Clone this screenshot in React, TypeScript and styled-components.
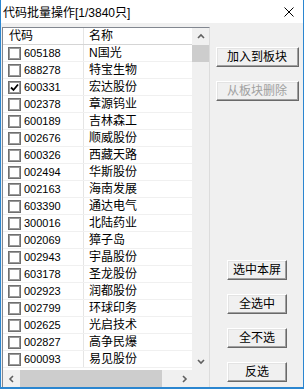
import styled, { createGlobalStyle } from "styled-components";

const STOCKS = [
    { code: "605188", name: "N国光" },
    { code: "688278", name: "特宝生物" },
    { code: "600331", name: "宏达股份", checked: true },
    { code: "002378", name: "章源钨业" },
    { code: "600189", name: "吉林森工" },
    { code: "002676", name: "顺威股份" },
    { code: "600326", name: "西藏天路" },
    { code: "002494", name: "华斯股份" },
    { code: "002163", name: "海南发展" },
    { code: "603390", name: "通达电气" },
    { code: "300016", name: "北陆药业" },
    { code: "002069", name: "獐子岛" },
    { code: "002943", name: "宇晶股份" },
    { code: "603178", name: "圣龙股份" },
    { code: "002923", name: "润都股份" },
    { code: "002799", name: "环球印务" },
    { code: "002625", name: "光启技术" },
    { code: "002827", name: "高争民爆" },
    { code: "600093", name: "易见股份" },
];

const GlobalStyle = createGlobalStyle`
    html, body { margin: 0; padding: 0; background: #ffffff; }
    body { font-family: "Liberation Sans", "Noto Sans CJK SC", sans-serif; }
`;

const Window = styled.div`
    width: 304px;
    height: 389px;
    box-sizing: border-box;
    border-left: 1px solid #2b86d0;
    border-right: 1px solid #2b86d0;
    border-bottom: 2px solid #2b86d0;
    display: flex;
    flex-direction: column;
    overflow: hidden;
`;

const TitleBar = styled.div`
    height: 23px;
    flex: none;
    background: #ffffff;
    display: flex;
    align-items: center;
    justify-content: space-between;
    padding: 0 9px 0 2px;
    font-size: 12px;
    color: #000;
`;

const Client = styled.div`
    flex: 1;
    min-height: 0;
    display: flex;
    background: #f0f0f0;
    padding-left: 1px;
`;

const ListBox = styled.div`
    width: 208px;
    margin-top: 4px;
    box-sizing: border-box;
    border-top: 1px solid #828790;
    border-left: 1px solid #828790;
    border-right: 1px solid #dcdcdc;
    display: flex;
    flex-direction: column;
    background: #ffffff;
`;

const ListMain = styled.div`
    flex: 1;
    min-height: 0;
    display: flex;
`;

const Table = styled.div`
    flex: 1;
    min-width: 0;
    overflow: hidden;
    display: flex;
    flex-direction: column;
`;

const Row = styled.div<{ $header?: boolean }>`
    height: 17px;
    flex: none;
    box-sizing: border-box;
    display: grid;
    grid-template-columns: 81px 1fr;
    border-bottom: 1px solid ${(p) => (p.$header ? "#d5d5d5" : "#f0f0f0")};
    font-size: 12px;
    color: #000;
`;

const Cell = styled.div<{ $pad: number }>`
    display: flex;
    align-items: center;
    padding-left: ${(p) => p.$pad}px;
    white-space: nowrap;
    overflow: hidden;
    line-height: 16px;
    &:first-child { border-right: 1px solid #e5e5e5; }
`;

const Code = styled.span`
    font-family: "Liberation Sans", sans-serif;
    font-size: 11px;
    margin-left: 3px;
`;

const Check = styled.span`
    width: 13px;
    height: 13px;
    box-sizing: border-box;
    border: 1px solid #6f6f6f;
    box-shadow: inset 0 0 0 1px #9a9a9a;
    background: #ffffff;
    display: flex;
    align-items: center;
    justify-content: center;
`;

const VScroll = styled.div`
    width: 17px;
    flex: none;
    background: #f0f0f0;
    display: flex;
    flex-direction: column;
`;

const HScroll = styled.div`
    height: 17px;
    flex: none;
    display: flex;
    background: #f0f0f0;
`;

const Arrow = styled.div`
    width: 17px;
    height: 17px;
    flex: none;
    display: flex;
    align-items: center;
    justify-content: center;
`;

const Track = styled.div<{ $dir: "row" | "column" }>`
    flex: 1;
    display: flex;
    flex-direction: ${(p) => p.$dir};
`;

const Thumb = styled.div<{ $w: number; $h: number }>`
    width: ${(p) => p.$w}px;
    height: ${(p) => p.$h}px;
    background: #cdcdcd;
`;

const Corner = styled.div`
    width: 17px;
    flex: none;
    background: #f0f0f0;
`;

const SidePanel = styled.div`
    flex: 1;
    display: flex;
    flex-direction: column;
    align-items: center;
    padding: 24px 0 5px 1px;
`;

const ButtonGroup = styled.div<{ $bottom?: boolean }>`
    display: flex;
    flex-direction: column;
    align-items: center;
    gap: 14px;
    margin-top: ${(p) => (p.$bottom ? "auto" : "0")};
`;

const Button = styled.button<{ $w: number }>`
    width: ${(p) => p.$w}px;
    height: 20px;
    padding: 0;
    margin: 0;
    box-sizing: border-box;
    background: #f0f0f0;
    border-style: solid;
    border-width: 1px;
    border-color: #ffffff #696969 #696969 #ffffff;
    box-shadow: inset -1px -1px 0 #a0a0a0, inset 1px 1px 0 #e3e3e3;
    font-family: "Liberation Sans", "Noto Sans CJK SC", sans-serif;
    font-size: 12px;
    line-height: 18px;
    color: #000;
    &:disabled { color: #a0a0a0; }
`;

const Chevron = ({ dir }: { dir: "up" | "down" | "left" | "right" }) => {
    const d = {
        up: "M1 5 L4 2 L7 5",
        down: "M1 2 L4 5 L7 2",
        left: "M5 1 L2 4 L5 7",
        right: "M3 1 L6 4 L3 7",
    }[dir];
    return (
        <svg width="8" height="8" viewBox="0 0 8 8">
            <path d={d} fill="none" stroke="#606060" strokeWidth="1.6" />
        </svg>
    );
};

const App = () => {
    return (
        <>
            <GlobalStyle />
            <Window>
                <TitleBar>
                    <span>代码批量操作[1/3840只]</span>
                    <svg width="10" height="10" viewBox="0 0 10 10">
                        <path d="M0.5 0.5 L9.5 9.5 M9.5 0.5 L0.5 9.5" stroke="#000" strokeWidth="1" />
                    </svg>
                </TitleBar>
                <Client>
                    <ListBox>
                        <ListMain>
                            <Table>
                                <Row $header>
                                    <Cell $pad={6}>代码</Cell>
                                    <Cell $pad={5}>名称</Cell>
                                </Row>
                                {STOCKS.map((s) => (
                                    <Row key={s.code}>
                                        <Cell $pad={5}>
                                            <Check>
                                                {s.checked && (
                                                    <svg width="9" height="9" viewBox="0 0 9 9">
                                                        <path d="M1 4.5 L3.5 7 L8 1.5" fill="none" stroke="#000" strokeWidth="1.8" />
                                                    </svg>
                                                )}
                                            </Check>
                                            <Code>{s.code}</Code>
                                        </Cell>
                                        <Cell $pad={5}>{s.name}</Cell>
                                    </Row>
                                ))}
                            </Table>
                            <VScroll>
                                <Arrow><Chevron dir="up" /></Arrow>
                                <Track $dir="column">
                                    <Thumb $w={17} $h={17} />
                                </Track>
                                <Arrow><Chevron dir="down" /></Arrow>
                            </VScroll>
                        </ListMain>
                        <HScroll>
                            <Arrow><Chevron dir="left" /></Arrow>
                            <Track $dir="row">
                                <Thumb $w={142} $h={17} />
                            </Track>
                            <Arrow><Chevron dir="right" /></Arrow>
                            <Corner />
                        </HScroll>
                    </ListBox>
                    <SidePanel>
                        <ButtonGroup>
                            <Button $w={83}>加入到板块</Button>
                            <Button $w={83} disabled>从板块删除</Button>
                        </ButtonGroup>
                        <ButtonGroup $bottom>
                            <Button $w={60}>选中本屏</Button>
                            <Button $w={60}>全选中</Button>
                            <Button $w={60}>全不选</Button>
                            <Button $w={60}>反选</Button>
                        </ButtonGroup>
                    </SidePanel>
                </Client>
            </Window>
        </>
    );
};

export default App;
